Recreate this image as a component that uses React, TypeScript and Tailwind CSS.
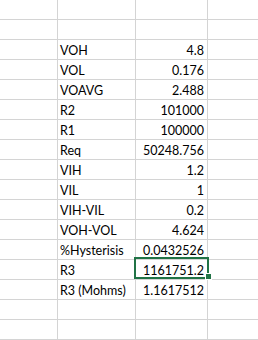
const rows: [string, string][] = [
  ["", ""],
  ["", ""],
  ["VOH", "4.8"],
  ["VOL", "0.176"],
  ["VOAVG", "2.488"],
  ["R2", "101000"],
  ["R1", "100000"],
  ["Req", "50248.756"],
  ["VIH", "1.2"],
  ["VIL", "1"],
  ["VIH-VIL", "0.2"],
  ["VOH-VOL", "4.624"],
  ["%Hysterisis", "0.0432526"],
  ["R3", "1161751.2"],
  ["R3 (Mohms)", "1.1617512"],
  ["", ""],
  ["", ""],
];

export default function App() {
  return (
    <div
      className="relative w-[258px] h-[340px] overflow-hidden bg-white text-black text-[12.5px]"
      style={{ fontFamily: "Lato, 'Liberation Sans', sans-serif" }}
    >
      <div className="grid grid-cols-[58px_78px_72px_50px]">
        {rows.map(([label, value], i) => (
          <div key={i} className="contents">
            <div className="h-[20px] border-r border-b border-[#d4d4d4]" />
            <div className="h-[20px] border-r border-b border-[#d4d4d4] pl-[2px] pt-[3px] leading-[16px] whitespace-nowrap">
              {label}
            </div>
            <div className="h-[20px] border-r border-b border-[#d4d4d4] pr-[3px] pt-[3px] leading-[16px] text-right whitespace-nowrap">
              {value}
            </div>
            <div className="h-[20px] border-b border-[#d4d4d4]" />
          </div>
        ))}
      </div>

      {/* selected cell */}
      <div className="absolute left-[134px] top-[257px] w-[75px] h-[22px] border-2 border-[#217346]" />
      <div className="absolute left-[205px] top-[273px] w-[7px] h-[7px] bg-[#217346] border border-white" />
    </div>
  );
}
